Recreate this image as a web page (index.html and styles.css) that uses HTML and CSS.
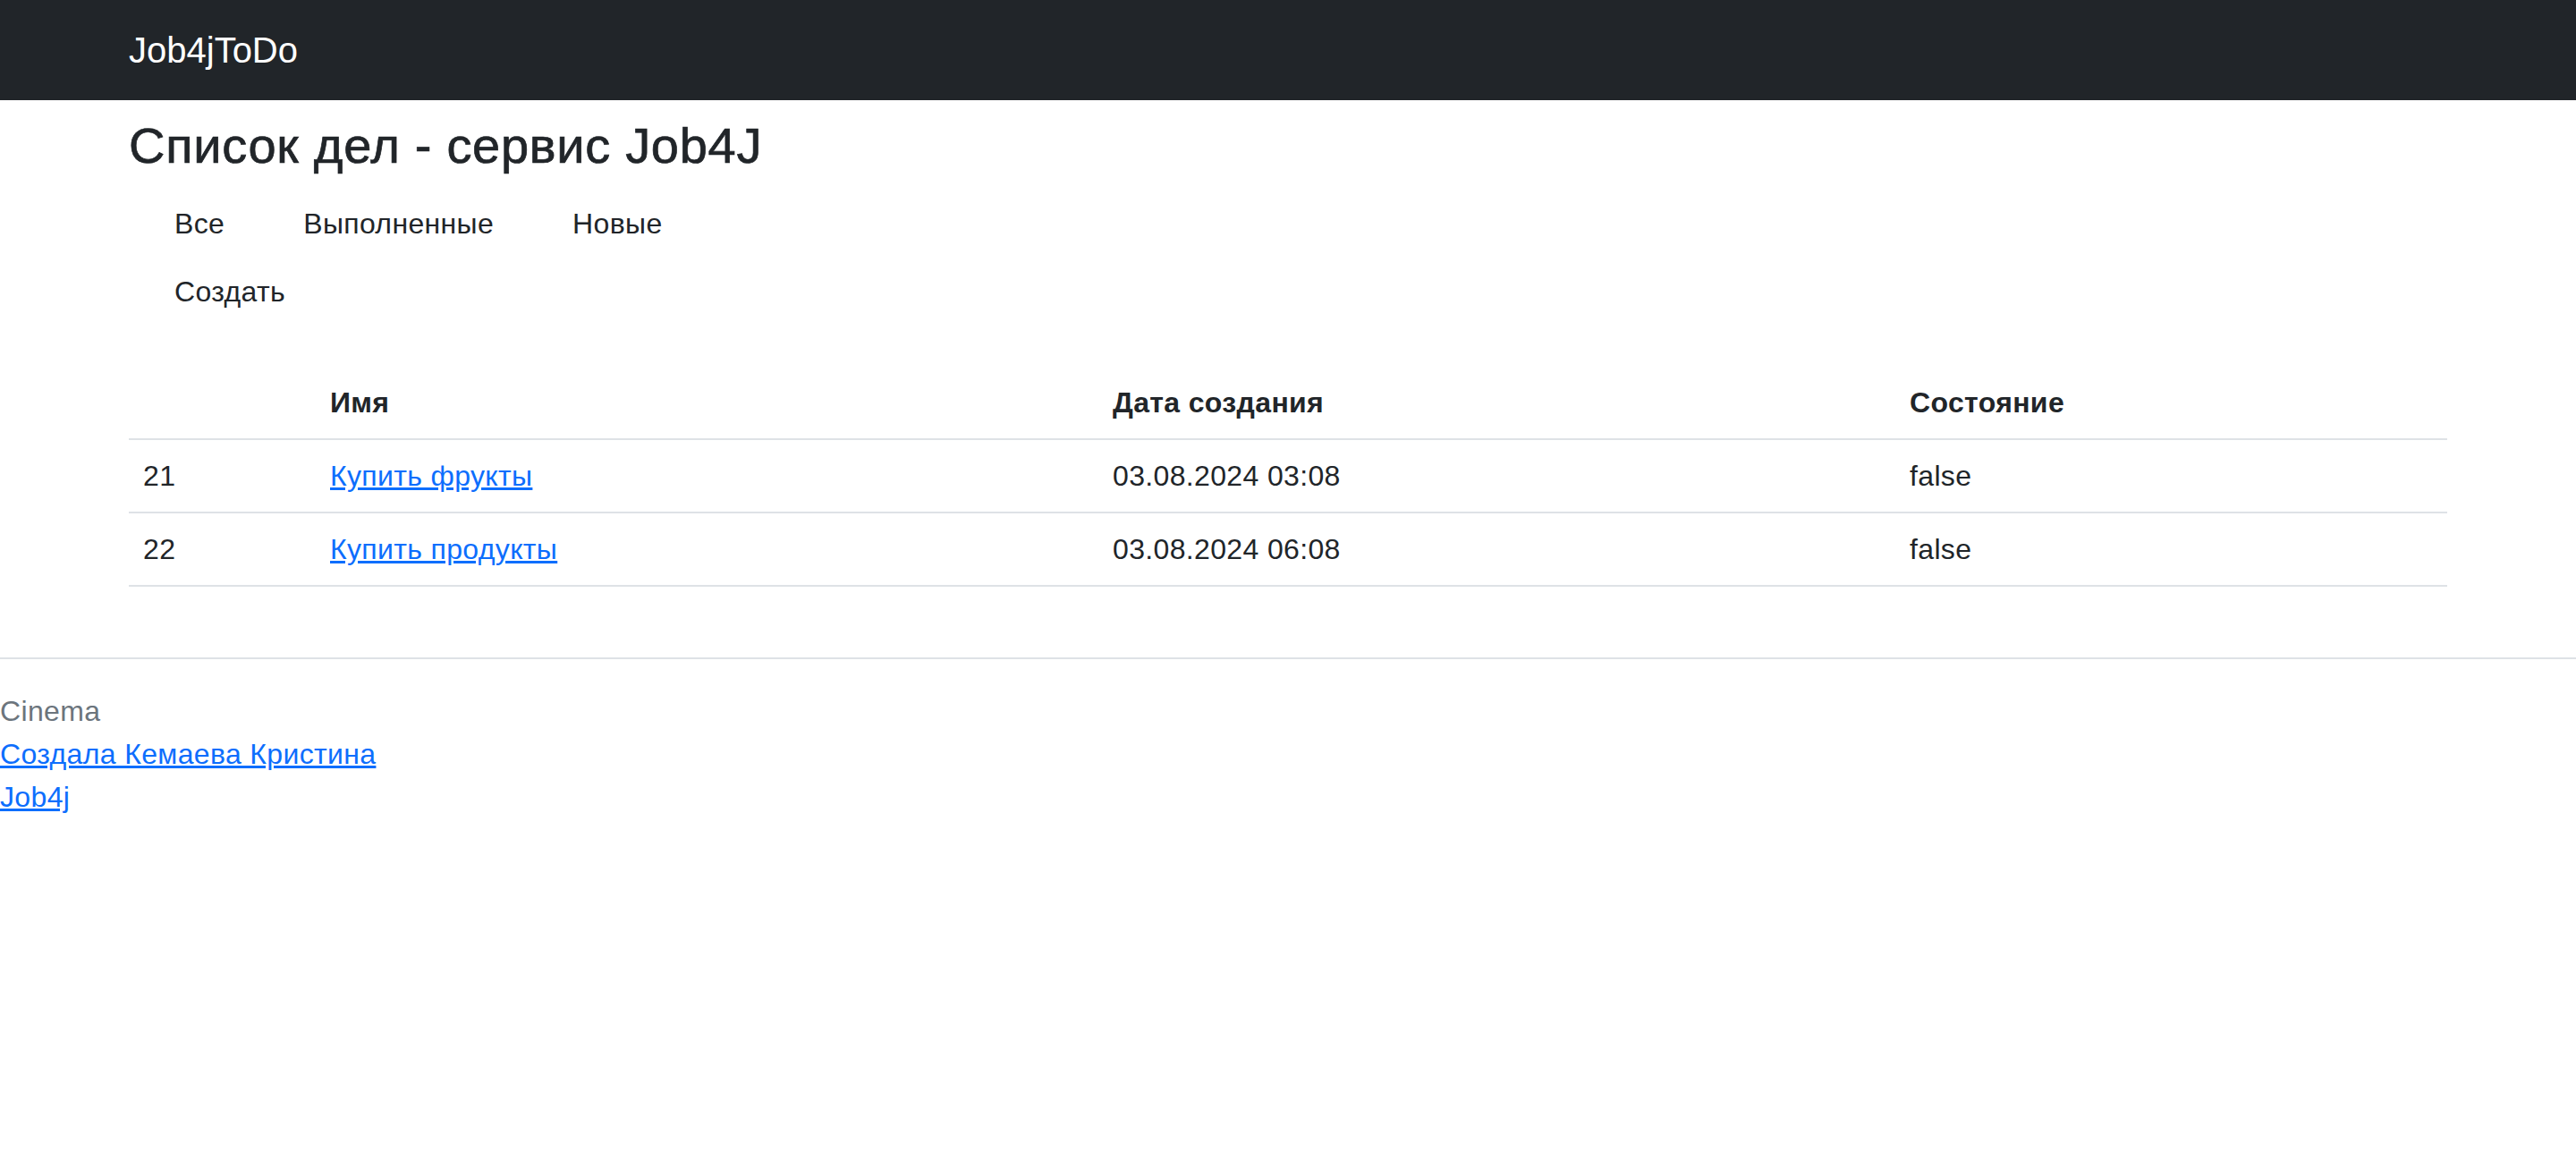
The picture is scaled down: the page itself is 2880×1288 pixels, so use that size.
FILE: index.html
```html
<!DOCTYPE html>
<html lang="ru">
<head>
<meta charset="utf-8">
<title>Job4jToDo</title>
<link rel="stylesheet" href="styles.css">
</head>
<body>
<nav class="navbar">
  <div class="container">
    <a class="brand" href="#">Job4jToDo</a>
  </div>
</nav>
<main class="container">
  <h2 class="page-title">Список дел - сервис Job4J</h2>
  <ul class="nav">
    <li><a class="nav-link" href="#">Все</a></li>
    <li><a class="nav-link" href="#">Выполненные</a></li>
    <li><a class="nav-link" href="#">Новые</a></li>
  </ul>
  <ul class="nav">
    <li><a class="nav-link" href="#">Создать</a></li>
  </ul>
  <table class="table">
    <colgroup>
      <col class="c-id">
      <col class="c-name">
      <col class="c-date">
      <col class="c-state">
    </colgroup>
    <thead>
      <tr><th></th><th>Имя</th><th>Дата создания</th><th>Состояние</th></tr>
    </thead>
    <tbody>
      <tr><td>21</td><td><a href="#">Купить фрукты</a></td><td>03.08.2024 03:08</td><td>false</td></tr>
      <tr><td>22</td><td><a href="#">Купить продукты</a></td><td>03.08.2024 06:08</td><td>false</td></tr>
    </tbody>
  </table>
</main>
<footer class="footer">
  <hr class="divider">
  <div class="muted">Cinema</div>
  <div><a href="#">Создала Кемаева Кристина</a></div>
  <div><a href="#">Job4j</a></div>
</footer>
</body>
</html>
```
FILE: styles.css
```css
html, body {
  margin: 0;
  padding: 0;
}
body {
  font-family: "Liberation Sans", Arial, sans-serif;
  font-size: 32px;
  line-height: 1.5;
  letter-spacing: 0.35px;
  color: #212529;
  background: #fff;
}
a {
  color: #0d6efd;
  text-decoration: underline;
}
.container {
  max-width: 2640px;
  margin: 0 auto;
  padding: 0 24px;
  box-sizing: border-box;
}
.navbar {
  background: #212529;
  padding: 16px 0;
}
.brand {
  display: inline-block;
  color: #fff;
  text-decoration: none;
  font-size: 40px;
  line-height: 60px;
  padding: 10px 0;
  letter-spacing: 0;
}
.page-title {
  font-size: 56px;
  line-height: 1.2;
  font-weight: 500;
  letter-spacing: 0.7px;
  -webkit-text-stroke: 0.7px #212529;
  margin: 17px 0 16px;
}
.nav {
  display: flex;
  gap: 24px;
  list-style: none;
  margin: 0;
  padding: 0 0 0 19px;
}
.nav-link {
  display: block;
  padding: 14px 32px;
  color: #212529;
  text-decoration: none;
}
.table {
  width: 100%;
  border-collapse: collapse;
  table-layout: fixed;
  margin: 46px 0 0;
}
.c-id { width: 209px; }
.c-name { width: 875px; }
.c-date { width: 891px; }
.c-state { width: 617px; }
.table th,
.table td {
  padding: 16px;
  text-align: left;
  vertical-align: top;
  border-bottom: 2px solid #dee2e6;
}
.table th {
  font-weight: bold;
}
.divider {
  border: 0;
  border-top: 2px solid #dee2e6;
  margin: 79px 0 34px;
}
.muted {
  color: #6c757d;
}
```
